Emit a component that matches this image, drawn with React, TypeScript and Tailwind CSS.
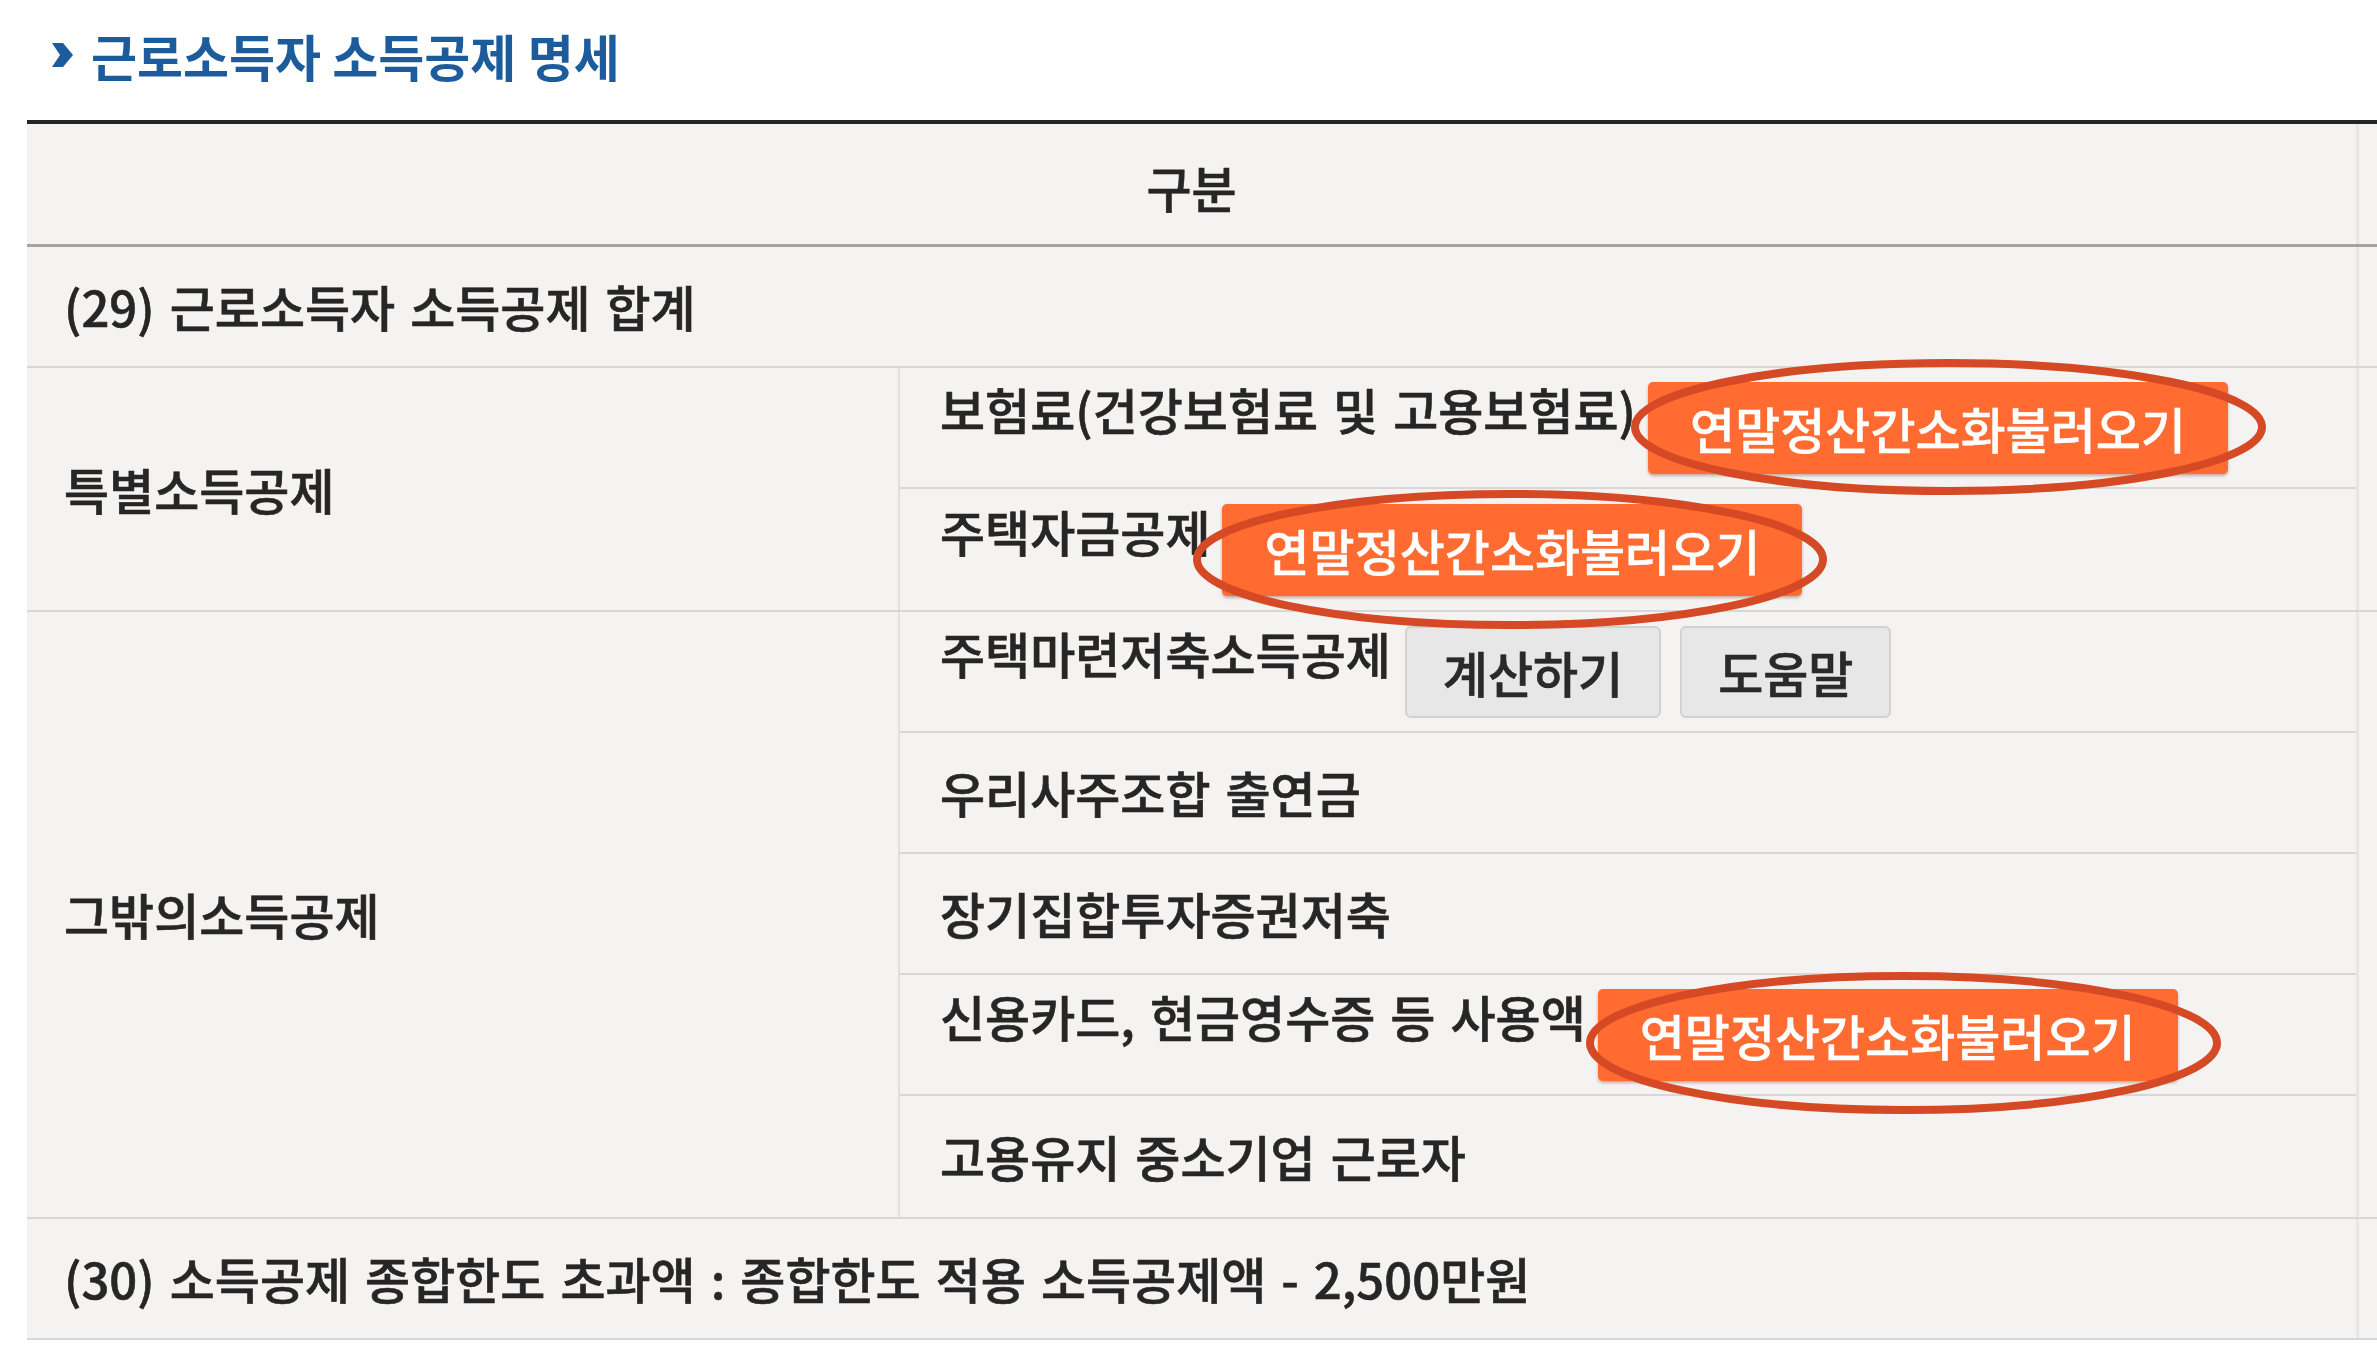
import type { ReactNode } from 'react'

const FONT = "font-['Noto_Sans_CJK_KR','Noto_Sans',sans-serif]"

type Ring = { box: string; w: number; h: number }

function Ellipse({ ring }: { ring: Ring }) {
  return (
    <svg
      className={`pointer-events-none absolute z-10 ${ring.box}`}
      viewBox={`0 0 ${ring.w} ${ring.h}`}
      fill="none"
    >
      <ellipse
        cx={ring.w / 2}
        cy={ring.h / 2}
        rx={ring.w / 2 - 5}
        ry={ring.h / 2 - 5}
        stroke="#d54a24"
        strokeWidth="8"
      />
    </svg>
  )
}

function LoadButton({ ring }: { ring: Ring }) {
  return (
    <div className="relative ml-[12px]">
      <button
        type="button"
        className="flex h-[92px] items-center rounded-[5px] bg-[#ff6b31] px-[42px] text-[49px] leading-none text-white shadow-[0_2px_3px_rgba(120,40,0,0.35)] [-webkit-text-stroke:0.4px_#ffffff]"
      >
        연말정산간소화불러오기
      </button>
      <Ellipse ring={ring} />
    </div>
  )
}

function GrayButton({ children }: { children: ReactNode }) {
  return (
    <button
      type="button"
      className="flex h-[92px] items-center rounded-[6px] border-2 border-[#d2d2d2] bg-[#e7e7e7] px-[36px] text-[49px] leading-none text-[#2a2a2a]"
    >
      {children}
    </button>
  )
}

function SubRow({ children, last, raised }: { children: ReactNode; last?: boolean; raised?: boolean }) {
  return (
    <div
      className={`flex h-[121px] items-center pl-[40px] ${last ? '' : 'border-b-2 border-[#d7d7d7]'}`}
    >
      {raised ? children : <span className="leading-[1.2]">{children}</span>}
    </div>
  )
}

function Label({ children }: { children: ReactNode }) {
  return <span className="mb-[36px] leading-[1.2]">{children}</span>
}

function Tail() {
  return <div className="flex-1 border-l-[3px] border-[#e6e6e6]" />
}

export default function App() {
  return (
    <div
      className={`min-h-screen w-full overflow-hidden bg-white text-[49px] font-medium text-[#262626] [word-spacing:4px] [-webkit-text-stroke:0.6px_#262626] ${FONT}`}
    >
      <div className="flex h-[120px] items-center pb-[10px] pl-[52px]">
        <svg className="h-[24px] w-[21px]" viewBox="0 0 21 24" fill="#1d5c9c">
          <path d="M0 0 L11 0 L21 12 L11 24 L0 24 L8 12 Z" />
        </svg>
        <h2 className="ml-[18px] text-[50px] font-bold leading-none text-[#1d5c9c] [word-spacing:0px] [-webkit-text-stroke:0px]">
          근로소득자 소득공제 명세
        </h2>
      </div>

      <div className="ml-[27px] border-t-4 border-[#252525] bg-[#f4f3f1]">
        {/* header */}
        <div className="flex h-[123px] border-b-[3px] border-[#a3a3a3]">
          <div className="flex w-[2329px] items-center justify-center pt-[6px] leading-[1.2]">구분</div>
          <Tail />
        </div>

        {/* (29) */}
        <div className="flex h-[121px] border-b-2 border-[#d7d7d7]">
          <div className="flex w-[2329px] items-center pl-[37px] leading-[1.2]">(29) 근로소득자 소득공제 합계</div>
          <Tail />
        </div>

        {/* 특별소득공제 */}
        <div className="flex border-b-2 border-[#d7d7d7]">
          <div className="flex w-[871px] items-center pl-[37px] leading-[1.2]">특별소득공제</div>
          <div className="w-[1458px] border-l-2 border-[#e0e0e0]">
            <SubRow raised>
              <Label>보험료(건강보험료 및 고용보험료)</Label>
              <LoadButton ring={{ box: 'left-[-18px] top-[-24px] h-[138px] w-[637px]', w: 637, h: 138 }} />
            </SubRow>
            <SubRow raised last>
              <Label>주택자금공제</Label>
              <LoadButton ring={{ box: 'left-[-30px] top-[-15px] h-[141px] w-[636px]', w: 636, h: 141 }} />
            </SubRow>
          </div>
          <Tail />
        </div>

        {/* 그밖의소득공제 */}
        <div className="flex border-b-2 border-[#d7d7d7]">
          <div className="flex w-[871px] items-center pl-[37px] leading-[1.2]">그밖의소득공제</div>
          <div className="w-[1458px] border-l-2 border-[#e0e0e0]">
            <SubRow raised>
              <Label>주택마련저축소득공제</Label>
              <div className="ml-[14px] flex gap-[19px]">
                <GrayButton>계산하기</GrayButton>
                <GrayButton>도움말</GrayButton>
              </div>
            </SubRow>
            <SubRow>우리사주조합 출연금</SubRow>
            <SubRow>장기집합투자증권저축</SubRow>
            <SubRow raised>
              <Label>신용카드, 현금영수증 등 사용액</Label>
              <LoadButton ring={{ box: 'left-[-13px] top-[-18px] h-[144px] w-[637px]', w: 637, h: 144 }} />
            </SubRow>
            <SubRow last>고용유지 중소기업 근로자</SubRow>
          </div>
          <Tail />
        </div>

        {/* (30) */}
        <div className="flex h-[121px] border-b-2 border-[#d7d7d7]">
          <div className="flex w-[2329px] items-center pl-[37px] leading-[1.2]">
            (30) 소득공제 종합한도 초과액 : 종합한도 적용 소득공제액 - 2,500만원
          </div>
          <Tail />
        </div>
      </div>
    </div>
  )
}
